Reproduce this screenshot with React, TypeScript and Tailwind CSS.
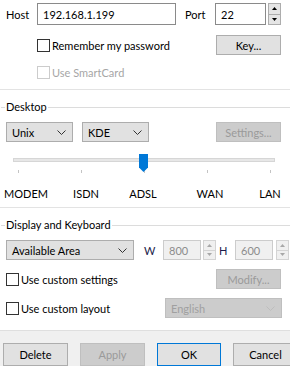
import React from "react";

const Checkbox: React.FC<{ disabled?: boolean }> = ({ disabled }) => (
    <span
        className={`block h-[13px] w-[13px] shrink-0 border bg-white ${disabled ? "border-[#cccccc]" : "border-[#333333]"}`}
    />
);

const Chevron: React.FC<{ color: string }> = ({ color }) => (
    <svg width="9" height="5" viewBox="0 0 9 5" className="shrink-0">
        <path d="M0.5 0.5 L4.5 4.5 L8.5 0.5" fill="none" stroke={color} strokeWidth="1" />
    </svg>
);

const Combo: React.FC<{ label: string; width: string; disabled?: boolean }> = ({
    label,
    width,
    disabled,
}) => (
    <div
        className={`flex h-[20px] items-center justify-between border pl-[5px] pr-[6px] ${width} ${
            disabled
                ? "border-[#bfbfbf] bg-[#cccccc] text-[#a0a0a0]"
                : "border-[#adadad] bg-[#e1e1e1] text-black"
        }`}
    >
        <span className="pt-px">{label}</span>
        <Chevron color={disabled ? "#bdbdbd" : "#333333"} />
    </div>
);

const Spinner: React.FC<{ height: string; disabled?: boolean }> = ({ height, disabled }) => {
    const arrow = disabled ? "#a8a8a8" : "#000000";
    return (
        <div
            className={`flex w-[13px] shrink-0 flex-col border ${height} ${
                disabled ? "border-[#d4d4d4] bg-[#f0f0f0]" : "border-[#adadad] bg-[#e5e5e5]"
            }`}
        >
            <div className="flex flex-1 items-center justify-center">
                <svg width="5" height="3" viewBox="0 0 5 3">
                    <path d="M0 3 L2.5 0 L5 3 Z" fill={arrow} />
                </svg>
            </div>
            <div className={`h-px ${disabled ? "bg-[#d4d4d4]" : "bg-[#adadad]"}`} />
            <div className="flex flex-1 items-center justify-center">
                <svg width="5" height="3" viewBox="0 0 5 3">
                    <path d="M0 0 L2.5 3 L5 0 Z" fill={arrow} />
                </svg>
            </div>
        </div>
    );
};

const Button: React.FC<{
    label: string;
    className?: string;
    disabled?: boolean;
    primary?: boolean;
    height?: string;
}> = ({ label, className = "", disabled, primary, height = "h-[20px]" }) => (
    <div
        className={`flex shrink-0 items-center justify-center border pt-px ${height} ${className} ${
            disabled
                ? "border-[#bfbfbf] bg-[#cccccc] text-[#9a9a9a]"
                : primary
                  ? "border-[#0078d7] bg-[#e1e1e1] text-black"
                  : "border-[#adadad] bg-[#e1e1e1] text-black"
        }`}
    >
        {label}
    </div>
);

const GroupLabel: React.FC<{ label: string }> = ({ label }) => (
    <div className="mt-[10px] flex h-[14px] items-center">
        <div className="ml-[1px] h-px w-[4px] bg-[#dcdcdc]" />
        <span className="px-[1px] leading-[14px]">{label}</span>
        <div className="h-px flex-1 bg-[#dcdcdc]" />
    </div>
);

const Separator = () => <div className="h-px w-full bg-[#e3e3e3]" />;

export default function App() {
    const speeds = [
        { label: "MODEM", ml: "ml-[4px]" },
        { label: "ISDN", ml: "ml-[22px]" },
        { label: "ADSL", ml: "ml-[17px]" },
        { label: "WAN", ml: "ml-[27px]" },
        { label: "LAN", ml: "ml-[20px]" },
    ];

    return (
        <div className="flex h-[366px] w-[290px] flex-col overflow-hidden bg-white font-['Lato','Liberation_Sans',Arial,sans-serif] text-[11px] leading-[16px] text-black">
            {/* Connection */}
            <div className="mt-[3px] flex h-[22px] items-center">
                <span className="w-[37px] pl-[6px] pt-[2px]">Host</span>
                <div className="flex h-[22px] w-[139px] items-center border border-[#8a8a8a] bg-white pl-[5px] pt-[2px]">
                    192.168.1.199
                </div>
                <span className="ml-[9px] w-[30px] pt-[2px]">Port</span>
                <div className="flex h-[22px] w-[51px] items-center border border-[#8a8a8a] bg-white pl-[5px] pt-[2px]">
                    22
                </div>
                <div className="ml-[2px]">
                    <Spinner height="h-[22px]" />
                </div>
            </div>

            <div className="mt-[10px] flex h-[20px] items-center pl-[37px]">
                <Checkbox />
                <span className="ml-[2px] pt-px">Remember my password</span>
                <Button label="Key..." className="ml-auto mr-[9px] w-[65px]" />
            </div>

            <div className="mt-[11px] flex h-[13px] items-center pl-[37px]">
                <Checkbox disabled />
                <span className="ml-[2px] pt-px text-[#a6a6a6]">Use SmartCard</span>
            </div>

            <div className="mt-[10px]">
                <Separator />
            </div>

            {/* Desktop */}
            <GroupLabel label="Desktop" />
            <div className="mt-[8px] flex h-[20px] items-center">
                <div className="ml-[6px]">
                    <Combo label="Unix" width="w-[67px]" />
                </div>
                <div className="ml-[9px]">
                    <Combo label="KDE" width="w-[67px]" />
                </div>
                <Button label="Settings..." disabled className="ml-auto mr-[9px] w-[65px]" />
            </div>

            <div className="relative mt-[12px] h-[18px]">
                <div className="absolute left-[13px] top-[4px] h-[4px] w-[262px] border border-[#d6d6d6] bg-[#e7e7e7]" />
                <svg
                    width="9"
                    height="18"
                    viewBox="0 0 9 18"
                    className="absolute left-[139px] top-0"
                >
                    <path d="M0 0 H9 V13.5 L4.5 18 L0 13.5 Z" fill="#0078d7" />
                </svg>
            </div>
            <div className="flex h-[3px] gap-[62px] pl-[18px]">
                {[0, 1, 2, 3, 4].map((i) => (
                    <div key={i} className="h-[3px] w-px bg-[#c4c4c4]" />
                ))}
            </div>
            <div className="mt-[13px] flex h-[16px]">
                {speeds.map((s) => (
                    <span key={s.label} className={`${s.ml} w-[40px] text-center`}>
                        {s.label}
                    </span>
                ))}
            </div>

            <div className="mt-[5px]">
                <Separator />
            </div>

            {/* Display and Keyboard */}
            <GroupLabel label="Display and Keyboard" />
            <div className="mt-[8px] flex h-[20px] items-center">
                <div className="ml-[6px]">
                    <Combo label="Available Area" width="w-[128px]" />
                </div>
                <span className="ml-[10px] w-[19px] pt-px text-[#1c1c4a]">W</span>
                <div className="flex h-[20px] w-[38px] items-center border border-[#cccccc] bg-[#f0f0f0] pl-[5px] pt-px text-[#8c8c8c]">
                    800
                </div>
                <div className="ml-[2px]">
                    <Spinner height="h-[20px]" disabled />
                </div>
                <span className="ml-[3px] w-[16px] pt-px text-[#1c1c4a]">H</span>
                <div className="flex h-[20px] w-[38px] items-center border border-[#cccccc] bg-[#f0f0f0] pl-[5px] pt-px text-[#8c8c8c]">
                    600
                </div>
                <div className="ml-[3px]">
                    <Spinner height="h-[20px]" disabled />
                </div>
            </div>

            <div className="mt-[9px] flex h-[20px] items-center pl-[6px]">
                <Checkbox />
                <span className="ml-[2px] pt-px">Use custom settings</span>
                <Button label="Modify..." disabled className="ml-auto mr-[9px] w-[65px]" />
            </div>

            <div className="mt-[9px] flex h-[20px] items-center pl-[6px]">
                <Checkbox />
                <span className="ml-[2px] pt-px">Use custom layout</span>
                <div className="ml-auto mr-[8px]">
                    <Combo label="English" width="w-[117px]" disabled />
                </div>
            </div>

            {/* Buttons */}
            <div className="mt-[12px] flex flex-1 items-start border-t border-[#dfdfdf] bg-[#f0f0f0] pt-[12px]">
                <Button label="Delete" height="h-[23px]" className="ml-[3px] w-[65px]" />
                <Button label="Apply" height="h-[23px]" disabled className="ml-[12px] w-[65px]" />
                <Button label="OK" height="h-[23px]" primary className="ml-[12px] w-[64px]" />
                <Button label="Cancel" height="h-[23px]" className="ml-[12px] w-[65px]" />
            </div>
        </div>
    );
}
